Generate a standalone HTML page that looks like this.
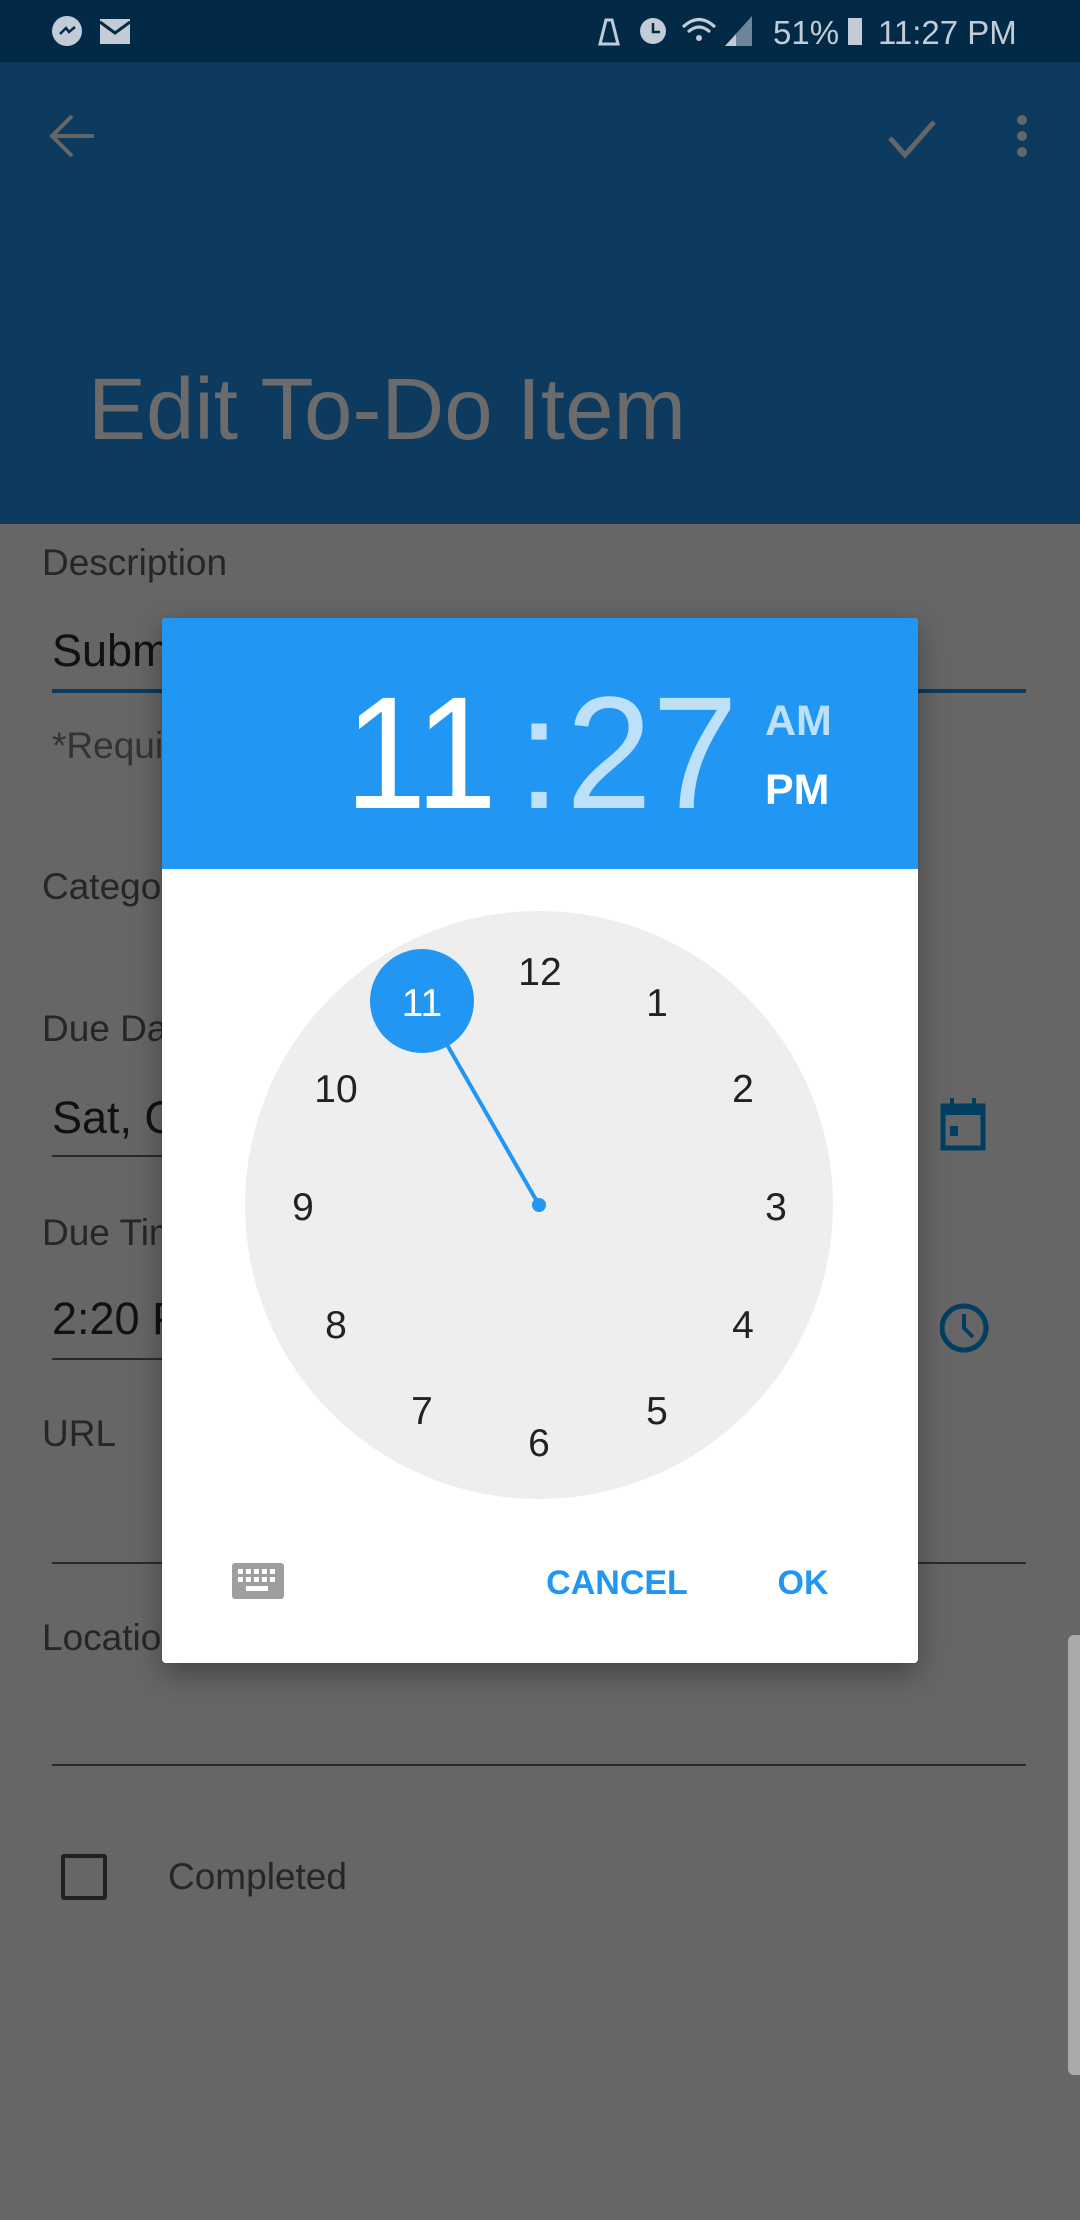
<!DOCTYPE html>
<html><head><meta charset="utf-8"><style>
*{margin:0;padding:0;box-sizing:border-box}
body{width:1080px;height:2220px;background:#666;position:relative;overflow:hidden;font-family:"Liberation Sans",sans-serif}
.a{position:absolute}
.lbl{position:absolute;color:#262626;font-size:37px;transform:translateY(-50%)}
.inp{position:absolute;color:#111;font-size:45px;transform:translateY(-50%)}
.ul{position:absolute;left:52px;width:974px;height:2px;background:#2a2a2a}
</style></head><body>
<div class="a" style="left:0;top:0;width:1080px;height:62px;background:#022a47"></div>
<div class="a" style="left:0;top:62px;width:1080px;height:462px;background:#0d3a5f"></div>
<svg class="a" style="left:0;top:0" width="1080" height="62">
<circle cx="67" cy="31" r="15" fill="#c3ccd6"/><path d="M58 44 L62 34 L66 40" fill="#c3ccd6"/>
<path d="M60 34 L66 28 L69 32 L75 27" stroke="#022a47" stroke-width="2.5" fill="none"/>
<rect x="100" y="19" width="30" height="25" fill="#c3ccd6"/><path d="M100 22 L115 33 L130 22" stroke="#022a47" stroke-width="3" fill="none"/>
<path d="M600 44 L606 20 L612 20 L618 44Z" fill="none" stroke="#c3ccd6" stroke-width="3"/>
<circle cx="653" cy="31" r="13" fill="#c3ccd6"/><path d="M653 23 V32 H660" stroke="#022a47" stroke-width="2.5" fill="none"/>
<path d="M683 27 Q699 12 715 27" stroke="#c3ccd6" stroke-width="3" fill="none"/><path d="M688 32 Q699 22 710 32" stroke="#c3ccd6" stroke-width="3" fill="none"/><circle cx="699" cy="38" r="3" fill="#c3ccd6"/>
<path d="M725 46 L752 16 L752 46Z" fill="#6d8499"/><path d="M725 46 L736 46 L736 34Z" fill="#c3ccd6"/>
<text x="773" y="44" font-size="33" fill="#c3ccd6" font-family="Liberation Sans">51%</text>
<rect x="848" y="18" width="14" height="27" fill="#c3ccd6"/>
<text x="878" y="44" font-size="33" fill="#c3ccd6" font-family="Liberation Sans">11:27 PM</text>
</svg>
<svg class="a" style="left:0;top:62px" width="1080" height="150">
<path d="M52 74 H94 M72 54 L52 74 L72 94" stroke="#666" stroke-width="4" fill="none"/>
<path d="M890 76 L905 93 L934 60" stroke="#666" stroke-width="5" fill="none"/>
<circle cx="1022" cy="58" r="5" fill="#666"/><circle cx="1022" cy="74" r="5" fill="#666"/><circle cx="1022" cy="90" r="5" fill="#666"/>
</svg>
<div class="a" style="left:88px;top:410px;transform:translateY(-50%);font-size:87px;color:#6b6b6b">Edit To-Do Item</div>
<div class="lbl" style="left:42px;top:563px">Description</div>
<div class="inp" style="left:52px;top:651px">Submit</div>
<div class="a" style="left:52px;top:689px;width:974px;height:4px;background:#0d3a5f"></div>
<div class="lbl" style="left:52px;top:746px;color:#333">*Required</div>
<div class="lbl" style="left:42px;top:887px">Category</div>
<div class="lbl" style="left:42px;top:1029px">Due Date</div>
<div class="inp" style="left:52px;top:1118px">Sat, Oct</div>
<div class="ul" style="top:1155px;width:860px"></div>
<div class="lbl" style="left:42px;top:1233px">Due Time</div>
<div class="inp" style="left:52px;top:1319px">2:20 PM</div>
<div class="ul" style="top:1358px;width:860px"></div>
<svg class="a" style="left:940px;top:1096px" width="50" height="260">
<rect x="3" y="10" width="40" height="42" fill="none" stroke="#023e62" stroke-width="5"/><rect x="3" y="10" width="40" height="9" fill="#023e62"/>
<rect x="10" y="2" width="4" height="10" fill="#023e62"/><rect x="32" y="2" width="4" height="10" fill="#023e62"/><rect x="10" y="30" width="8" height="10" fill="#023e62"/>
<circle cx="24" cy="232" r="22" fill="none" stroke="#023e62" stroke-width="5"/><path d="M24 218 V232 L33 241" stroke="#023e62" stroke-width="4" fill="none"/>
</svg>
<div class="lbl" style="left:42px;top:1434px">URL</div>
<div class="ul" style="top:1562px"></div>
<div class="lbl" style="left:42px;top:1638px">Location</div>
<div class="ul" style="top:1764px"></div>
<div class="a" style="left:61px;top:1854px;width:46px;height:46px;border:4px solid #222;border-radius:3px"></div>
<div class="lbl" style="left:168px;top:1877px">Completed</div>
<div class="a" style="left:1068px;top:1635px;width:12px;height:440px;background:#aaa;border-radius:6px 0 0 6px"></div>
<div class="a" style="left:162px;top:618px;width:756px;height:1045px;background:#fff;border-radius:4px;overflow:hidden;box-shadow:0 10px 30px rgba(0,0,0,.35)">
<div class="a" style="left:0;top:0;width:756px;height:251px;background:#2196f3"></div>
</div>
<svg class="a" style="left:0;top:618px" width="1080" height="1045" font-family="Liberation Sans">
<text x="345" y="190" font-size="160" fill="#fff" textLength="152" lengthAdjust="spacingAndGlyphs">11</text>
<text x="539" y="190" font-size="160" fill="#bde0fb" text-anchor="middle">:</text>
<text x="566" y="190" font-size="160" fill="#bde0fb" textLength="172" lengthAdjust="spacingAndGlyphs">27</text>
<text x="765" y="117" font-size="43" font-weight="bold" fill="#bde0fb">AM</text>
<text x="765" y="186" font-size="43" font-weight="bold" fill="#fff">PM</text>
<circle cx="539" cy="587" r="294" fill="#eee"/>
<line x1="539" y1="587" x2="422" y2="383" stroke="#2196f3" stroke-width="4"/>
<circle cx="539" cy="587" r="7" fill="#2196f3"/>
<circle cx="422" cy="383" r="52" fill="#2196f3"/>
<g font-size="39" fill="#222" text-anchor="middle" transform="translate(0,-14)">
<text x="540" y="381">12</text>
<text x="657" y="412">1</text>
<text x="743" y="498">2</text>
<text x="776" y="616">3</text>
<text x="743" y="734">4</text>
<text x="657" y="820">5</text>
<text x="539" y="852">6</text>
<text x="422" y="820">7</text>
<text x="336" y="734">8</text>
<text x="303" y="616">9</text>
<text x="336" y="498">10</text>
<text x="422" y="412" fill="#fff">11</text>
</g>
<rect x="232" y="945" width="52" height="36" rx="3" fill="#9e9e9e"/>
<g fill="#fff"><rect x="238" y="951" width="5" height="5"/><rect x="246" y="951" width="5" height="5"/><rect x="254" y="951" width="5" height="5"/><rect x="262" y="951" width="5" height="5"/><rect x="270" y="951" width="5" height="5"/>
<rect x="238" y="959" width="5" height="5"/><rect x="246" y="959" width="5" height="5"/><rect x="254" y="959" width="5" height="5"/><rect x="262" y="959" width="5" height="5"/><rect x="270" y="959" width="5" height="5"/>
<rect x="246" y="968" width="22" height="5"/></g>
<text x="617" y="976" font-size="34" font-weight="bold" fill="#2196f3" text-anchor="middle">CANCEL</text>
<text x="803" y="976" font-size="34" font-weight="bold" fill="#2196f3" text-anchor="middle">OK</text>
</svg>
</body></html>
